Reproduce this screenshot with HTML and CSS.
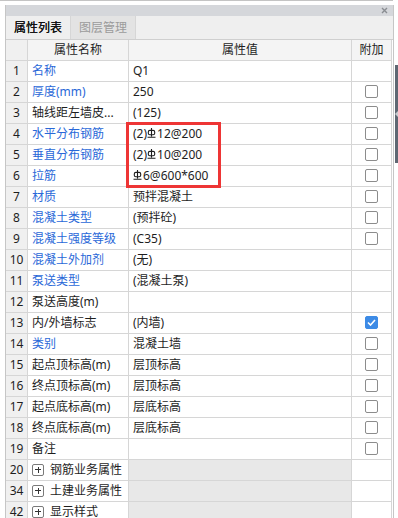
FILE: index.html
```html
<!DOCTYPE html>
<html>
<head>
  <meta charset='utf-8'>
  <title>属性列表</title>
  <meta name='viewport' content='width=device-width, initial-scale=1'>
  <link rel="stylesheet" href="styles.css">
</head>
<body>
  <div class="topline"></div>

  <div class="frame">
    <div class="panel">
      <div class="titlebar">
        <svg class="close" width="7" height="7" viewBox="0 0 7 7"><path d="M1 1L6 6M6 1L1 6" stroke="#8a8d92" stroke-width="1.4"/></svg>
      </div>

      <div class="tabs">
        <div class="tab active">属性列表</div>
        <div class="tab">图层管理</div>
      </div>

      <div class="grid">
        <table class="props">
          <tr class="head">
            <td class="num"></td>
            <td class="name">属性名称</td>
            <td class="val">属性值</td>
            <td class="add">附加</td>
          </tr>
          <tr><td class="num">1</td><td class="name blue">名称</td><td class="val">Q1</td><td class="add"></td></tr>
          <tr><td class="num">2</td><td class="name blue">厚度(mm)</td><td class="val">250</td><td class="add"><span class="box"></span></td></tr>
          <tr><td class="num">3</td><td class="name">轴线距左墙皮...</td><td class="val">(125)</td><td class="add"><span class="box"></span></td></tr>
          <tr><td class="num">4</td><td class="name blue">水平分布钢筋</td><td class="val">(2)<svg class="bar" width="9" height="10" viewBox="0 0 9 10"><path d="M4.5 0V8.5M0.5 9.3H8.5" stroke="#1e1e1e" stroke-width="1.1"/><rect x="1.3" y="2.4" width="6.4" height="4.4" rx="1.6" fill="none" stroke="#1e1e1e" stroke-width="1.1"/></svg>12@200</td><td class="add"><span class="box"></span></td></tr>
          <tr><td class="num">5</td><td class="name blue">垂直分布钢筋</td><td class="val">(2)<svg class="bar" width="9" height="10" viewBox="0 0 9 10"><path d="M4.5 0V8.5M0.5 9.3H8.5" stroke="#1e1e1e" stroke-width="1.1"/><rect x="1.3" y="2.4" width="6.4" height="4.4" rx="1.6" fill="none" stroke="#1e1e1e" stroke-width="1.1"/></svg>10@200</td><td class="add"><span class="box"></span></td></tr>
          <tr><td class="num">6</td><td class="name blue">拉筋</td><td class="val"><svg class="bar" width="9" height="10" viewBox="0 0 9 10"><path d="M4.5 0V8.5M0.5 9.3H8.5" stroke="#1e1e1e" stroke-width="1.1"/><rect x="1.3" y="2.4" width="6.4" height="4.4" rx="1.6" fill="none" stroke="#1e1e1e" stroke-width="1.1"/></svg>6@600*600</td><td class="add"><span class="box"></span></td></tr>
          <tr><td class="num">7</td><td class="name blue">材质</td><td class="val">预拌混凝土</td><td class="add"><span class="box"></span></td></tr>
          <tr><td class="num">8</td><td class="name blue">混凝土类型</td><td class="val">(预拌砼)</td><td class="add"><span class="box"></span></td></tr>
          <tr><td class="num">9</td><td class="name blue">混凝土强度等级</td><td class="val">(C35)</td><td class="add"><span class="box"></span></td></tr>
          <tr><td class="num">10</td><td class="name blue">混凝土外加剂</td><td class="val">(无)</td><td class="add"></td></tr>
          <tr><td class="num">11</td><td class="name blue">泵送类型</td><td class="val">(混凝土泵)</td><td class="add"></td></tr>
          <tr><td class="num">12</td><td class="name">泵送高度(m)</td><td class="val"></td><td class="add"></td></tr>
          <tr><td class="num">13</td><td class="name">内/外墙标志</td><td class="val">(内墙)</td><td class="add"><span class="box checked"><svg width="9" height="7" viewBox="0 0 9 7"><path d="M1 3.5L3.5 6L8 1" fill="none" stroke="#fff" stroke-width="1.6"/></svg></span></td></tr>
          <tr><td class="num">14</td><td class="name blue">类别</td><td class="val">混凝土墙</td><td class="add"><span class="box"></span></td></tr>
          <tr><td class="num">15</td><td class="name">起点顶标高(m)</td><td class="val">层顶标高</td><td class="add"><span class="box"></span></td></tr>
          <tr><td class="num">16</td><td class="name">终点顶标高(m)</td><td class="val">层顶标高</td><td class="add"><span class="box"></span></td></tr>
          <tr><td class="num">17</td><td class="name">起点底标高(m)</td><td class="val">层底标高</td><td class="add"><span class="box"></span></td></tr>
          <tr><td class="num">18</td><td class="name">终点底标高(m)</td><td class="val">层底标高</td><td class="add"><span class="box"></span></td></tr>
          <tr><td class="num">19</td><td class="name">备注</td><td class="val"></td><td class="add"><span class="box"></span></td></tr>
          <tr class="group"><td class="num">20</td><td class="name"><span class="plus"></span>钢筋业务属性</td><td class="val"></td><td class="add"></td></tr>
          <tr class="group"><td class="num">34</td><td class="name"><span class="plus"></span>土建业务属性</td><td class="val"></td><td class="add"></td></tr>
          <tr class="group"><td class="num">42</td><td class="name"><span class="plus"></span>显示样式</td><td class="val"></td><td class="add"></td></tr>
        </table>

        <div class="mark"></div>
      </div>
    </div>

    <div class="vscroll">
      <div class="thumb"><span class="grip"></span></div>
    </div>
  </div>
</body>
</html>
```

FILE: styles.css
```css
html, body {
  margin: 0;
  background: #fff;
}

body {
  font-family: "Noto Sans", "Noto Sans CJK SC", sans-serif;
  font-size: 12px;
  color: #1e1e1e;
  overflow: hidden;
}

.topline {
  width: 393px;
  height: 1px;
  background: #c4c4c4;
}

.frame {
  display: flex;
  margin-top: 4px;
}

.panel {
  margin-left: 5px;
  width: 387px;
  border-left: 1px solid #c6c6c6;
  border-right: 1px solid #c6c6c6;
  background: #efefef;
}

.titlebar {
  height: 11px;
  background: #d5d7db;
  display: flex;
  justify-content: flex-end;
  align-items: center;
  padding-right: 5px;
}

.tabs {
  height: 23px;
  display: flex;
  background: #efefef;
}

.tab {
  padding: 0 8px;
  line-height: 23px;
  color: #222;
}

.tab.active {
  color: #111;
  text-shadow: 0 0 0.3px #111;
}

.tab:not(.active) {
  background: #e3e3e3;
  color: #9b9b9b;
  border-left: 1px solid #d6d6d6;
  border-right: 1px solid #d6d6d6;
}

.grid {
  position: relative;
  background: #fff;
  border-top: 1px solid #cfcfcf;
  padding-right: 1px;
}

.props {
  table-layout: fixed;
  border-collapse: separate;
  border-spacing: 0;
  width: 386px;
}

.props td {
  box-sizing: border-box;
  height: 21px;
  padding: 0 4px;
  border-right: 1px solid #d6d6d6;
  border-bottom: 1px solid #d6d6d6;
  white-space: nowrap;
  overflow: hidden;
  line-height: 20px;
  background: #fff;
}

.props .num {
  width: 22px;
  padding: 0;
  text-align: center;
  background: #f0f0f0;
}

.props .name {
  width: 101px;
}

.props .val {
  width: 223px;
}

.props .add {
  width: 40px;
  padding: 0;
  text-align: center;
}

.head td {
  text-align: center;
  background: #f4f4f4;
}

.blue {
  color: #2a68d8;
}

.bar {
  vertical-align: 0;
  margin-right: 1px;
}

.box {
  display: inline-block;
  box-sizing: border-box;
  width: 13px;
  height: 13px;
  border: 1px solid #8c8c8c;
  border-radius: 2px;
  vertical-align: middle;
  margin-top: -2px;
}

.box.checked {
  background: #3d8be6;
  border-color: #3d8be6;
  display: inline-flex;
  align-items: center;
  justify-content: center;
}

.group .val {
  background: #e8e8e8;
}

.plus {
  display: inline-block;
  position: relative;
  box-sizing: border-box;
  width: 12px;
  height: 12px;
  border: 1px solid #7a7a7a;
  border-radius: 2px;
  vertical-align: middle;
  margin: -2px 6px 0 0;
}

.plus::before,
.plus::after {
  content: "";
  position: absolute;
  background: #333;
}

.plus::before {
  left: 2px;
  top: 4.5px;
  width: 6px;
  height: 1px;
}

.plus::after {
  left: 4.5px;
  top: 2px;
  width: 1px;
  height: 6px;
}

.mark {
  position: absolute;
  left: 120px;
  top: 82px;
  width: 89px;
  height: 60px;
  border: 3px solid #ee3535;
}

.vscroll {
  width: 4px;
  margin-left: 1px;
  padding-top: 60px;
}

.thumb {
  height: 98px;
  background: #5e6772;
  display: flex;
  align-items: center;
}

.grip {
  width: 0;
  height: 0;
  border-top: 3px solid transparent;
  border-bottom: 3px solid transparent;
  border-right: 3px solid #c9ccd0;
}
```
